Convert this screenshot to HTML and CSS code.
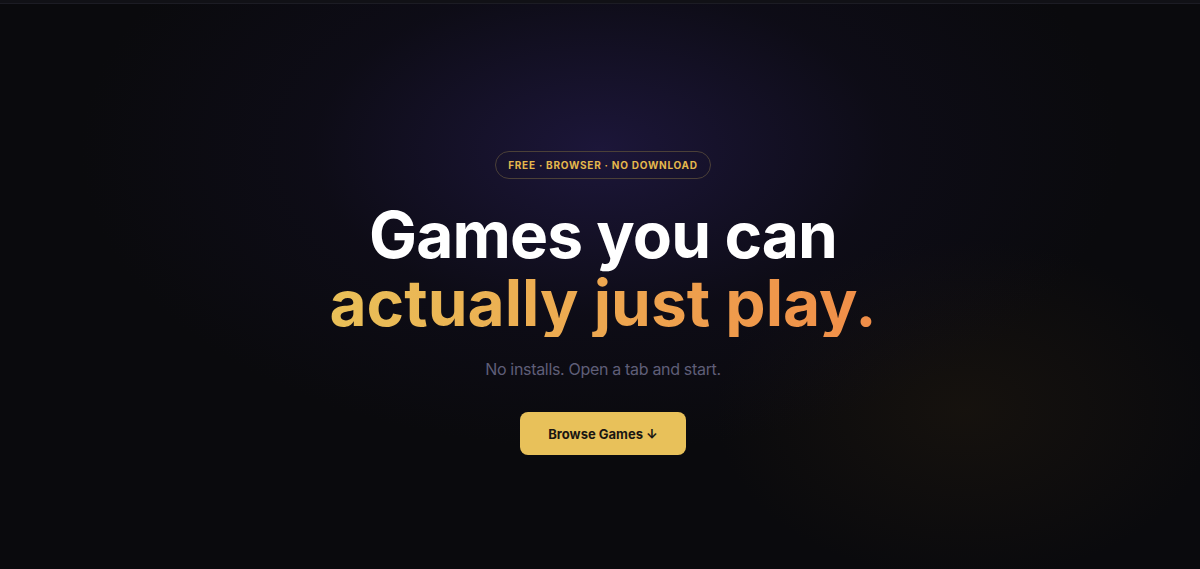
FILE: index.html
```html
<!DOCTYPE html>
<html lang="en">
<head>
<meta charset="utf-8">
<title>Games you can actually just play.</title>
<link rel="stylesheet" href="styles.css">
</head>
<body>
<div class="topbar"></div>
<main class="hero">
  <div class="pill">FREE · BROWSER · NO DOWNLOAD</div>
  <h1 class="title">
    <span class="line1">Games you can</span>
    <span class="line2">actually just play.</span>
  </h1>
  <p class="sub">No installs. Open a tab and start.</p>
  <a class="btn" href="#games">Browse Games ↓</a>
</main>
</body>
</html>
```

FILE: styles.css
```css
* { box-sizing: border-box; }
html, body { margin: 0; height: 100%; }
body {
  background-color: #0a0a0d;
  background-image:
    radial-gradient(ellipse 520px 300px at 600px 150px, rgba(34, 26, 72, 0.75), rgba(20, 16, 40, 0.35) 55%, rgba(10, 10, 13, 0) 100%),
    radial-gradient(ellipse 250px 170px at 965px 410px, rgba(52, 38, 16, 0.28), rgba(10, 10, 13, 0) 100%);
  font-family: Inter, "Liberation Sans", sans-serif;
  color: #fff;
  overflow: hidden;
}
.topbar {
  height: 4px;
  background: #111116;
  border-bottom: 1px solid #1c1c24;
}
.hero {
  display: flex;
  flex-direction: column;
  align-items: center;
  padding: 147px 0 0 6px;
}
.pill {
  height: 28px;
  padding: 0 12px;
  display: flex;
  align-items: center;
  border: 1px solid #4b4038;
  border-radius: 999px;
  color: #e5b84c;
  font-size: 10px;
  font-weight: 700;
  letter-spacing: 0.075em;
}
.title {
  margin: 22px 0 0;
  display: flex;
  flex-direction: column;
  align-items: center;
  font-size: 64px;
  font-weight: 700;
  line-height: 68px;
}
.line1 { color: #fff; letter-spacing: -0.014em; }
.line2 {
  letter-spacing: 0;
  background: linear-gradient(90deg, #e9c058 0%, #eea24e 60%, #f08d48 100%);
  -webkit-background-clip: text;
  background-clip: text;
  color: transparent;
}
.sub {
  margin: 22px 0 0;
  font-size: 16px;
  letter-spacing: -0.02em;
  color: #5f5e78;
}
.btn {
  margin-top: 33px;
  width: 166px;
  height: 43px;
  display: flex;
  align-items: center;
  justify-content: center;
  background: #e8c15a;
  border-radius: 8px;
  color: #1a1612;
  font-size: 13px;
  font-weight: 700;
  letter-spacing: 0;
  text-decoration: none;
}
```
